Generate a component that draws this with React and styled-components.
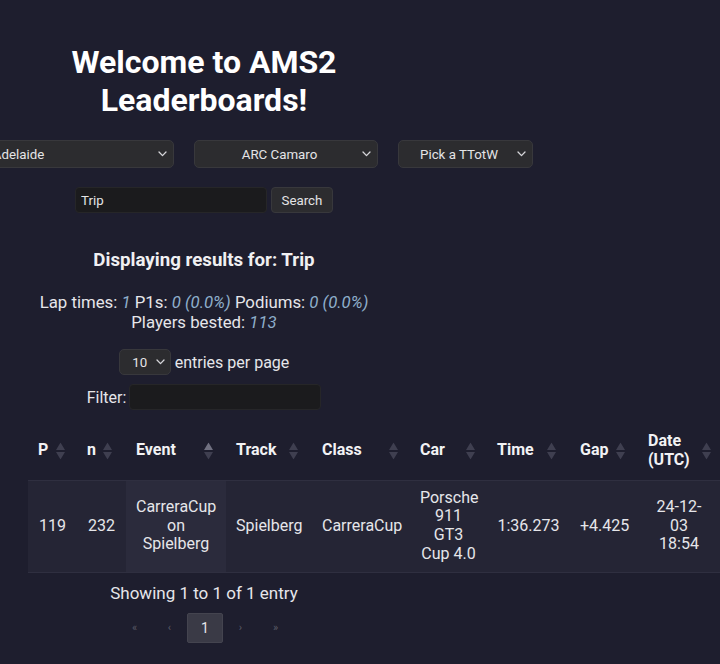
import React from "react";
import styled, { createGlobalStyle } from "styled-components";

const Global = createGlobalStyle`
  html, body { margin: 0; padding: 0; background: #1e1e2e; }
  body {
    font-family: Roboto, "Liberation Sans", sans-serif;
    color: #e6e6ea;
    overflow: hidden;
    width: 720px;
    height: 664px;
  }
`;

const Page = styled.div`
  width: 352px;
  margin-left: 28px;
  padding-top: 44px;
  display: flex;
  flex-direction: column;
  align-items: center;
`;

const Title = styled.h1`
  margin: 0;
  font-size: 32px;
  font-weight: 700;
  line-height: 37.5px;
  color: #ffffff;
  text-align: center;
`;

const SelectRow = styled.div`
  display: flex;
  justify-content: center;
  gap: 20px;
  margin-top: 21px;
  width: 100%;
`;

const SelectWrap = styled.div`
  position: relative;
  flex: 0 0 ${(p) => p.$w}px;
  width: ${(p) => p.$w}px;
  height: ${(p) => p.$h || 28}px;
`;

const Select = styled.select`
  appearance: none;
  width: 100%;
  height: 100%;
  box-sizing: border-box;
  background: #2c2c2f;
  border: 1px solid #38383c;
  border-radius: 5px;
  color: #e4e4e6;
  font-family: Roboto, "Liberation Sans", sans-serif;
  font-size: ${(p) => p.$fs || 13.3}px;
  text-align: center;
  text-align-last: center;
  padding: 0 ${(p) => p.$pr || 12}px 0 0;
  outline: none;
`;

const Chevron = styled.svg`
  position: absolute;
  right: ${(p) => p.$r || 7}px;
  top: 50%;
  transform: translateY(-50%);
  pointer-events: none;
`;

const SearchRow = styled.div`
  display: flex;
  gap: 4px;
  margin-top: 19px;
`;

const TextInput = styled.input`
  box-sizing: border-box;
  width: 192px;
  height: 26px;
  background: #1b1b1d;
  border: 1px solid #262628;
  border-radius: 4px;
  color: #e4e4e6;
  font-family: Roboto, "Liberation Sans", sans-serif;
  font-size: 13.3px;
  padding: 0 5px;
  outline: none;
`;

const Button = styled.button`
  box-sizing: border-box;
  width: 62px;
  height: 26px;
  background: #2c2c2f;
  border: 1px solid #38383c;
  border-radius: 4px;
  color: #e4e4e6;
  font-family: Roboto, "Liberation Sans", sans-serif;
  font-size: 13.3px;
  padding: 0;
`;

const Heading = styled.h2`
  margin: 37px 0 0;
  font-size: 18.7px;
  font-weight: 700;
  line-height: 21px;
  white-space: nowrap;
  color: #f0f0f2;
`;

const Stats = styled.div`
  margin-top: 21px;
  font-size: 16.8px;
  line-height: 20px;
  text-align: center;
  white-space: nowrap;
  color: #e6e6ea;
`;

const Val = styled.i`
  color: #8eaecb;
`;

const EntriesRow = styled.div`
  display: flex;
  align-items: center;
  gap: 4px;
  margin-top: 17px;
  font-size: 16px;
`;

const FilterRow = styled.div`
  display: flex;
  align-items: center;
  gap: 3px;
  margin-top: 9px;
  font-size: 16px;
`;

const Table = styled.table`
  align-self: flex-start;
  margin-top: 12px;
  width: 692px;
  table-layout: fixed;
  border-collapse: collapse;
  font-size: 16px;
  line-height: 18.75px;
`;

const Th = styled.th`
  position: relative;
  text-align: left;
  font-weight: 700;
  padding: 10px 18px 10px 10px;
  color: #f2f2f4;
  border-bottom: 1px solid #2f2f40;
`;

const SortIcon = styled.svg`
  position: absolute;
  right: ${(p) => p.$r}px;
  top: 50%;
  transform: translateY(-50%);
`;

const Tr = styled.tr`
  background: #252535;
  border-bottom: 1px solid #2f2f40;
`;

const Td = styled.td`
  text-align: center;
  padding: 8px ${(p) => (p.$narrow ? 13 : 10)}px;
  color: #e6e6ea;
  background: ${(p) => (p.$sorted ? "#2b2b3c" : "transparent")};
`;

const Info = styled.div`
  margin-top: 10px;
  font-size: 17px;
  line-height: 20px;
  color: #e6e6ea;
`;

const Pager = styled.div`
  display: flex;
  margin-top: 10px;
  margin-left: 2px;
`;

const PageBtn = styled.div`
  width: ${(p) => (p.$active ? 36 : 35)}px;
  height: 30px;
  display: flex;
  align-items: center;
  justify-content: center;
  box-sizing: border-box;
  border-radius: 2px;
  background: ${(p) => (p.$active ? "#3a3a46" : "transparent")};
  border: ${(p) => (p.$active ? "1px solid #44444f" : "none")};
  color: ${(p) => (p.$active ? "#e6e6ea" : "#5a5a66")};
  font-size: ${(p) => (p.$active ? 14 : 11)}px;
`;

const ChevronIcon = ({ r }) => (
  <Chevron $r={r} width="9" height="6" viewBox="0 0 9 6">
    <path d="M1 1 L4.5 4.6 L8 1" fill="none" stroke="#d6d6da" strokeWidth="1.3" strokeLinecap="round" strokeLinejoin="round" />
  </Chevron>
);

const Sort = ({ r, active }) => (
  <SortIcon $r={r} width="9" height="17" viewBox="0 0 9 17">
    <path d="M4.5 0 L9 7.5 L0 7.5 Z" fill={active ? "#707080" : "#3f3f50"} />
    <path d="M4.5 17 L9 9.5 L0 9.5 Z" fill="#3f3f50" />
  </SortIcon>
);

const cols = [
  { key: "P", w: 49, r: 12 },
  { key: "n", w: 49, r: 14 },
  { key: "Event", w: 100, r: 13, active: true },
  { key: "Track", w: 86, r: 14 },
  { key: "Class", w: 98, r: 12 },
  { key: "Car", w: 77, r: 12 },
  { key: "Time", w: 83, r: 14 },
  { key: "Gap", w: 68, r: 13 },
  { key: "Date (UTC)", w: 82, r: 9 },
];

const row = ["119", "232", "CarreraCup on Spielberg", "Spielberg", "CarreraCup", "Porsche 911 GT3 Cup 4.0", "1:36.273", "+4.425", "24-12-03 18:54"];

export default function App() {
  return (
    <>
      <Global />
      <Page>
        <Title>Welcome to AMS2 Leaderboards!</Title>
        <SelectRow>
          <SelectWrap $w={298}>
            <Select defaultValue="Adelaide">
              <option>Adelaide</option>
            </Select>
            <ChevronIcon />
          </SelectWrap>
          <SelectWrap $w={184}>
            <Select defaultValue="ARC Camaro">
              <option>ARC Camaro</option>
            </Select>
            <ChevronIcon />
          </SelectWrap>
          <SelectWrap $w={135}>
            <Select defaultValue="Pick a TTotW">
              <option>Pick a TTotW</option>
            </Select>
            <ChevronIcon />
          </SelectWrap>
        </SelectRow>
        <SearchRow>
          <TextInput defaultValue="Trip" />
          <Button>Search</Button>
        </SearchRow>
        <Heading>Displaying results for: Trip</Heading>
        <Stats>
          Lap times: <Val>1</Val> P1s: <Val>0 (0.0%)</Val> Podiums: <Val>0 (0.0%)</Val>
          <br />
          Players bested: <Val>113</Val>
        </Stats>
        <EntriesRow>
          <SelectWrap $w={52} $h={26}>
            <Select $fs={13.3} $pr={10} defaultValue="10">
              <option>10</option>
            </Select>
            <ChevronIcon r={6} />
          </SelectWrap>
          <span>entries per page</span>
        </EntriesRow>
        <FilterRow>
          <span>Filter:</span>
          <TextInput />
        </FilterRow>
        <Table>
          <colgroup>
            {cols.map((c) => (
              <col key={c.key} style={{ width: c.w }} />
            ))}
          </colgroup>
          <thead>
            <tr>
              {cols.map((c) => (
                <Th key={c.key}>
                  {c.key}
                  <Sort r={c.r} active={c.active} />
                </Th>
              ))}
            </tr>
          </thead>
          <tbody>
            <Tr>
              {row.map((v, i) => (
                <Td key={i} $sorted={i === 2} $narrow={i === 8}>
                  {v}
                </Td>
              ))}
            </Tr>
          </tbody>
        </Table>
        <Info>Showing 1 to 1 of 1 entry</Info>
        <Pager>
          <PageBtn>«</PageBtn>
          <PageBtn>‹</PageBtn>
          <PageBtn $active>1</PageBtn>
          <PageBtn>›</PageBtn>
          <PageBtn>»</PageBtn>
        </Pager>
      </Page>
    </>
  );
}
